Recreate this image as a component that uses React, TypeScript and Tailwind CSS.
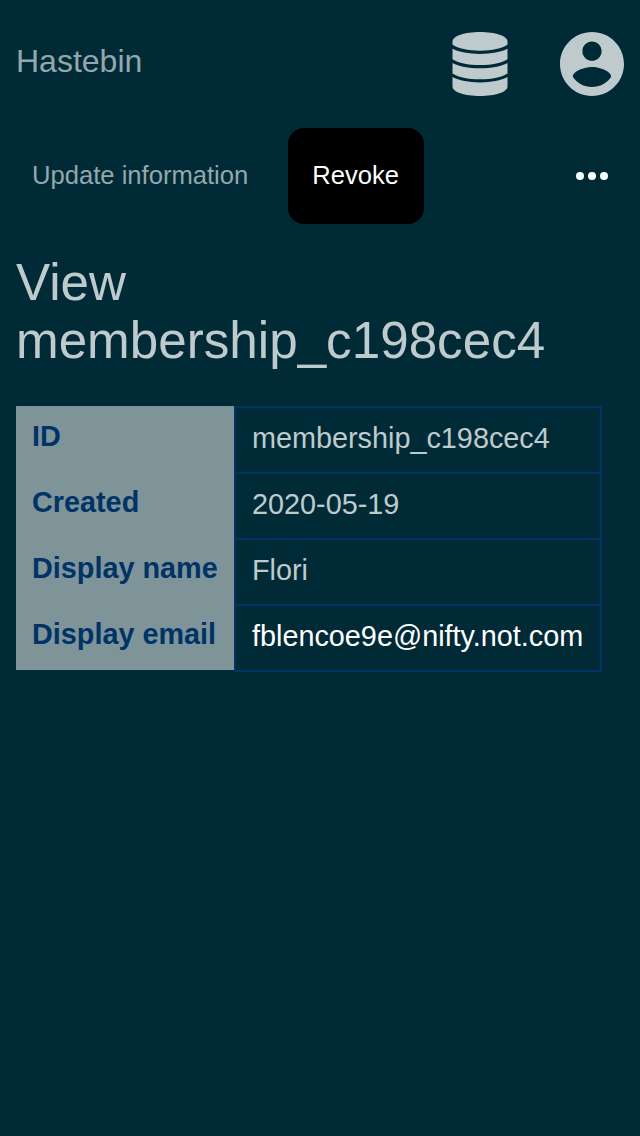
const rows = [
  { label: 'ID', value: 'membership_c198cec4' },
  { label: 'Created', value: '2020-05-19' },
  { label: 'Display name', value: 'Flori' },
  { label: 'Display email', value: 'fblencoe9e@nifty.not.com', link: true },
];

function DatabaseIcon() {
  return (
    <svg className="h-16 w-16" viewBox="0 0 64 64" fill="currentColor">
      <path d="M4.500 9.500C4.500 4 17 0 32 0s27.500 4 27.500 9.500V12.800C54 16.500 44 18.700 32 18.700S10 16.500 4.500 12.800z" />
      <path d="M4.500 16.800C11 20 20.500 21.900 32 21.900s21-1.900 27.500-5.100v10.400C54 30.800 44 33 32 33S10 30.800 4.500 27.200z" />
      <path d="M4.500 30.900C11 34.300 20.500 36.200 32 36.200s21-1.900 27.500-5.300v10.500C54 45 44 47.300 32 47.300S10 45 4.500 41.400z" />
      <path d="M4.500 45.100C11 48.500 20.500 50.400 32 50.400s21-1.900 27.500-5.300V54.500C59.500 60 47 64 32 64S4.500 60 4.500 54.500z" />
    </svg>
  );
}

export default function App() {
  return (
    <div className="min-h-[1136px] bg-[#002b36] font-['Liberation_Sans',sans-serif] text-[#bfcacd]">
      <header className="flex h-32 items-center justify-between px-4">
        <span className="-mt-1.5 text-[32px] leading-9 text-[#93a7ac]">Hastebin</span>
        <div className="flex gap-12">
          <DatabaseIcon />
          <svg className="h-16 w-16" viewBox="2 2 20 20" fill="currentColor">
            <path d="M12 2C6.48 2 2 6.48 2 12s4.48 10 10 10 10-4.48 10-10S17.52 2 12 2zm0 3c1.66 0 3 1.34 3 3s-1.34 3-3 3-3-1.34-3-3 1.34-3 3-3zm0 14.2c-2.5 0-4.71-1.28-6-3.22.03-1.99 4-3.08 6-3.08 1.99 0 5.97 1.09 6 3.08-1.29 1.94-3.5 3.22-6 3.22z" />
          </svg>
        </div>
      </header>
      <nav className="flex h-24 items-center px-8 text-[25.6px]">
        <span className="w-64 whitespace-nowrap pb-0.5 text-[#93a7ac]">Update information</span>
        <button className="h-24 w-[136px] rounded-2xl bg-black pb-0.5 pl-[24.3px] text-left text-white">Revoke</button>
        <svg className="ml-auto h-8 w-8" viewBox="0 0 32 32" fill="white">
          <circle cx="4" cy="16" r="4" />
          <circle cx="16" cy="16" r="4" />
          <circle cx="28" cy="16" r="4" />
        </svg>
      </nav>
      <h1 className="mt-[30px] px-4 text-[51.2px] leading-[58px]">View membership_c198cec4</h1>
      <dl className="ml-4 mt-9 text-[28.8px] leading-8">
        {rows.map((row) => (
          <div key={row.label} className="flex h-[66px]">
            <dt className="w-[218px] bg-[#7f9499] px-4 pt-[14px] font-bold text-[#003366]">{row.label}</dt>
            <dd className={row.link ? 'h-[68px] w-[368px] border-2 border-[#003366] px-4 pt-[14px] text-white' : 'h-[68px] w-[368px] border-2 border-[#003366] px-4 pt-[14px]'}>
              {row.value}
            </dd>
          </div>
        ))}
      </dl>
    </div>
  );
}
